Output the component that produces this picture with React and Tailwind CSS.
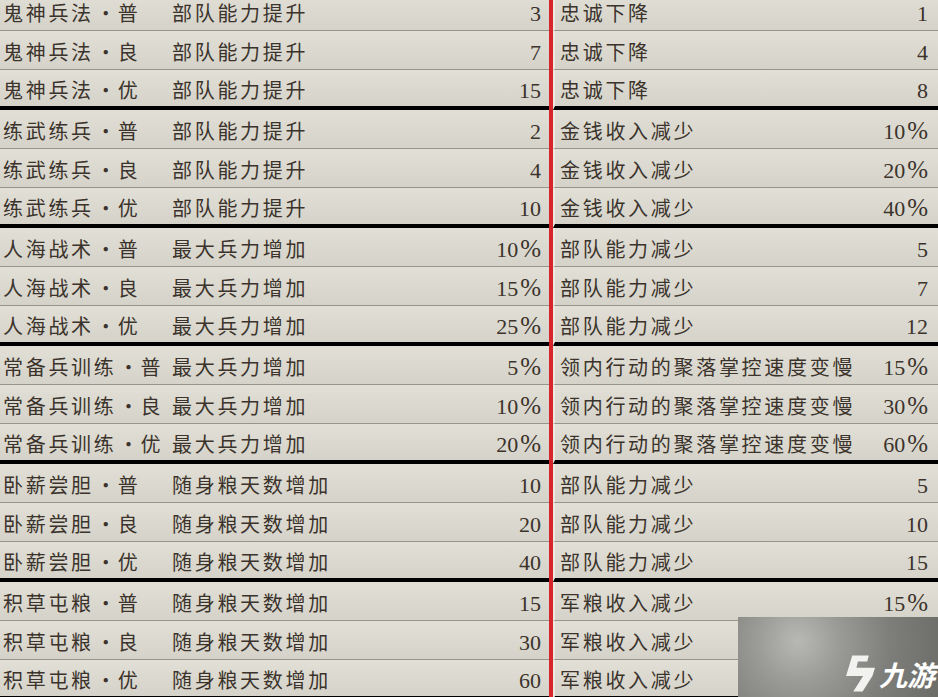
import React from "react";

const groups = [
  { name: "鬼神兵法", effect: "部队能力提升", vals: ["3", "7", "15"], penalty: "忠诚下降", pvals: ["1", "4", "8"] },
  { name: "练武练兵", effect: "部队能力提升", vals: ["2", "4", "10"], penalty: "金钱收入减少", pvals: ["10%", "20%", "40%"] },
  { name: "人海战术", effect: "最大兵力增加", vals: ["10%", "15%", "25%"], penalty: "部队能力减少", pvals: ["5", "7", "12"] },
  { name: "常备兵训练", effect: "最大兵力增加", vals: ["5%", "10%", "20%"], penalty: "领内行动的聚落掌控速度变慢", pvals: ["15%", "30%", "60%"] },
  { name: "卧薪尝胆", effect: "随身粮天数增加", vals: ["10", "20", "40"], penalty: "部队能力减少", pvals: ["5", "10", "15"] },
  { name: "积草屯粮", effect: "随身粮天数增加", vals: ["15", "30", "60"], penalty: "军粮收入减少", pvals: ["15%", "30%", "60%"] },
];

const grades = ["普", "良", "优"];

// numbers in the picture use a serif face, the % sign is drawn wider
function Num({ v }) {
  const pct = v.endsWith("%");
  const n = pct ? v.slice(0, -1) : v;
  return (
    <span className="ml-auto flex items-baseline font-['Liberation_Serif',serif] text-[22px]">
      {n}
      {pct && <span className="ml-[2px] text-[25px]">%</span>}
    </span>
  );
}

function Row({ name, grade, effect, value, penalty, pval, last }) {
  const border = last ? "border-b-4 border-black" : "border-b border-[#97948a]";
  return (
    <div className={last ? "flex h-[40px]" : "flex h-[39px]"}>
      <div className={`w-[549px] flex items-center pl-[3px] pr-[8px] pt-[4px] bg-gradient-to-b from-[#e2e0d6] to-[#d5d3c9] ${border}`}>
        <div className="w-[169px] flex items-center">
          <span className="tracking-[2.7px]">{name}</span>
          <span className="w-[24px] text-center">·</span>
          <span>{grade}</span>
        </div>
        <span className="tracking-[2.7px]">{effect}</span>
        <Num v={value} />
      </div>
      <div className="w-[4px] bg-[#d6252b]" />
      <div className={`flex-1 flex items-center pl-[5px] pr-[10px] pt-[4px] border-l-2 border-l-[#ebe9e0] bg-gradient-to-b from-[#e2e0d6] to-[#d5d3c9] ${border}`}>
        <span className="tracking-[2.7px]">{penalty}</span>
        <Num v={pval} />
      </div>
    </div>
  );
}

function Watermark() {
  return (
    <div className="absolute right-0 bottom-0 w-[200px] h-[80px] flex items-end justify-end pr-[3px] pb-[5px] bg-[radial-gradient(circle_at_30%_30%,#b8b8b5_0%,#9a9a97_28%,#7d7d7a_62%,#6b6b68_100%)]">
      <div className="flex items-center gap-[4px]">
        <svg width="31" height="37" viewBox="0 0 30 35" fill="#f2f2f0">
          <polygon points="8,0 24,0 22.5,6 13.5,6 12,12 30,12 27.5,20 18,35 9,35 18.5,20 2,20" />
        </svg>
        <span className="text-white text-[28px] font-bold italic leading-none">九游</span>
      </div>
    </div>
  );
}

export default function App() {
  return (
    <div className="relative w-[938px] h-[697px] overflow-hidden bg-[#d9d7cd] text-[20px] text-[#3b332c] font-['Noto_Sans_CJK_SC',sans-serif]">
      <div className="-mt-[8px]">
        {groups.map((g) =>
          grades.map((gr, i) => (
            <Row
              key={g.name + gr}
              name={g.name}
              grade={gr}
              effect={g.effect}
              value={g.vals[i]}
              penalty={g.penalty}
              pval={g.pvals[i]}
              last={i === 2}
            />
          ))
        )}
      </div>
      <Watermark />
    </div>
  );
}
